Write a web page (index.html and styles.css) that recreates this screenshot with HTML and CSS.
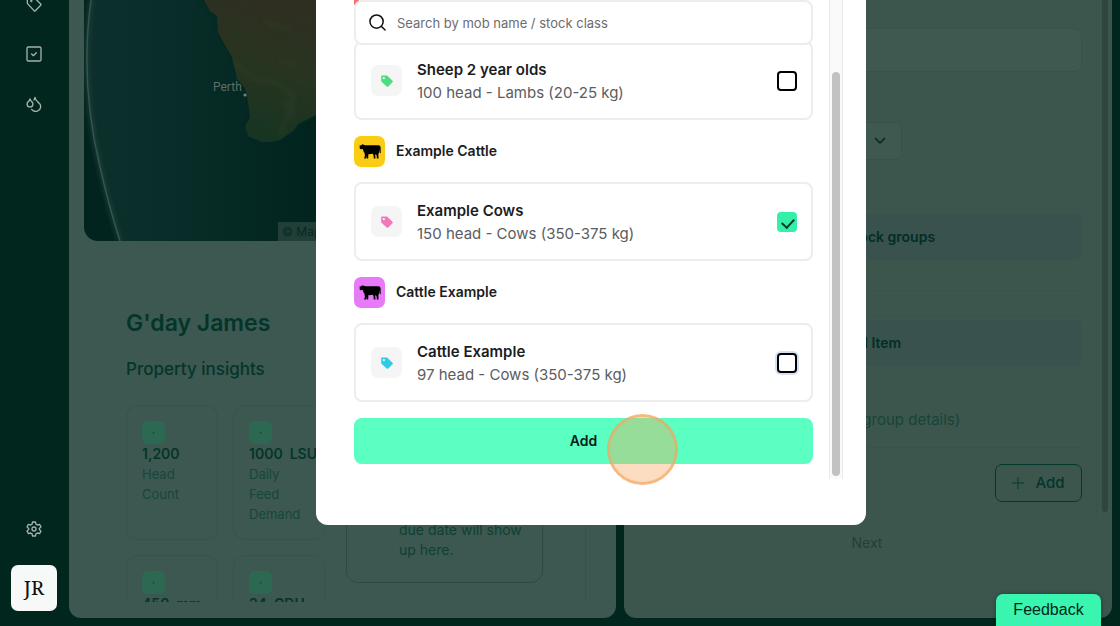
FILE: index.html
```html
<!DOCTYPE html>
<html lang="en">
<head>
    <meta charset="UTF-8">
    <meta name="viewport" content="width=device-width, initial-scale=1.0">
    <title>Add mobs</title>
    <link rel="stylesheet" href="styles.css">
</head>
<body>
    <svg class="sprite" aria-hidden="true">
        <symbol id="icon-tag" viewBox="0 0 24 24">
            <path fill-rule="evenodd" d="M2 3.500v8.200c0 .6.200 1.100.600 1.500l8.800 8.200c.8.800 2 .8 2.800 0l7.200-7.200c.8-.8.8-2 0-2.800l-8.800-8.200c-.4-.4-.9-.6-1.500-.6H3c-.6 0-1 .4-1 .9zM6.500 9a2 2 0 1 1 0-4 2 2 0 0 1 0 4z"/>
        </symbol>
        <symbol id="icon-cow" viewBox="0 0 42 28">
            <path d="M1 2l3 .500L6 0l3 1 3 1h25c2.500 0 4 1.500 4.300 4l.2 10-1 2-.9-2-.3-7-.8 7-1.500 3 .3 8.500h-3.300l-.2-5.500-1.800-3-1 2 .5 6.500h-3.200l-.5-6-1.300-3-7 .8-1.500-.3-.5 8.500h-3.200l.2-5.500-1.500 5.500H9.500l1.800-5-.8-6c-1.500-1.500-2.500-4-3-7.500L3 9.500 1 8l.5-2.500z"/>
        </symbol>
    </svg>

    <nav class="sidebar">
        <a href="#" aria-label="Tags">
            <svg viewBox="0 0 24 24"><path d="M2 11V3a1 1 0 0 1 1-1h9l10 10a1.500 1.500 0 0 1 0 2l-8 8a1.500 1.500 0 0 1-2 0z"/><circle cx="8" cy="7.500" r=".8"/></svg>
        </a>
        <a href="#" aria-label="Tasks">
            <svg viewBox="0 0 24 24"><rect x="1.500" y="1.500" width="21" height="21" rx="2"/><path d="M8.500 12l2.500 2.500 4.500-4.500"/></svg>
        </a>
        <a href="#" aria-label="Rainfall">
            <svg viewBox="0 0 24 24"><path d="M6 16.300c2.400 0 4.400-2 4.400-4.400 0-1.300-.6-2.500-1.900-3.500S6.400 6 6 4.300c-.3 1.600-1.200 3.100-2.500 4.100S1.600 10.600 1.600 11.900c0 2.400 2 4.400 4.400 4.400z"/><path d="M12 6a12 12 0 0 0 1.500-4c.6 2.800 2.200 5.400 4.500 7.200s4 4 4 6.300a7.500 7.500 0 0 1-13.500 4.500"/></svg>
        </a>
        <a href="#" class="settings" aria-label="Settings">
            <svg viewBox="0 0 24 24"><path d="M9.800 1.500h4.400l.7 3.300 2.100 1.200 3.300-1 2.200 3.800-2.500 2.400v1.600l2.500 2.400-2.200 3.800-3.300-1-2.100 1.200-.7 3.300H9.800l-.7-3.300L7 18l-3.300 1-2.200-3.800L4 12.800v-1.600L1.500 8.800 3.700 5 7 6l2.100-1.200z"/><circle cx="12" cy="12" r="3"/></svg>
        </a>
        <button class="avatar">JR</button>
    </nav>

    <main class="panels">
        <section class="panel home">
            <div class="home-scroll">
                <div class="map">
                    <svg viewBox="0 0 502 241" preserveAspectRatio="xMinYMin slice">
                        <defs>
                            <linearGradient id="sea" x1="0" x2="1" y1="0" y2="0">
                                <stop offset="0" stop-color="#0c302b"/>
                                <stop offset=".2" stop-color="#082c27"/>
                                <stop offset=".45" stop-color="#01241f"/>
                            </linearGradient>
                            <linearGradient id="land" gradientUnits="userSpaceOnUse" x1="220" x2="180" y1="0" y2="140">
                                <stop offset="0" stop-color="#302e20"/>
                                <stop offset=".5" stop-color="#283420"/>
                                <stop offset="1" stop-color="#163522"/>
                            </linearGradient>
                            <filter id="soft"><feGaussianBlur stdDeviation="2"/></filter>
                        </defs>
                        <rect width="502" height="241" fill="#02241f"/>
                        <path d="M7 0C0 50 1 105 16 167q9 40 20 74h466V0z" fill="url(#sea)"/>
                        <path d="M7 0C0 50 1 105 16 167q9 40 20 74" fill="none" stroke="#2c4e48" stroke-width="5" opacity=".5" filter="url(#soft)"/>
                        <path d="M7 0C0 50 1 105 16 167q9 40 20 74" fill="none" stroke="#34544d" stroke-width="1.500"/>
                        <path d="M116 0l14 14 6 18 14 25 8 24 8 12 0 24-4 10 6 10 16 5 14-2 12-12 23-15 40-8V0z" fill="#032c27" filter="url(#soft)"/>
                        <path d="M120 0l6 11 7 5 1 16 8 15 6 10 5 22 8 9 3 13 2 17-5 8 3 10 14 6 9 0 9-2 14-10 4-6 20-10 60-15V0z" fill="url(#land)"/>
                        <path d="M150 60q15 20 30 20t30 18l-14 38M180 20q14 10 26 8M196 60l16 6M200 100l10 16" fill="none" stroke="#34402a" stroke-width="5" opacity=".35" filter="url(#soft)"/>
                        <text x="129" y="91" class="map-label">Perth</text>
                        <circle cx="161" cy="95" r="1.500" fill="#75877e"/>
                    </svg>
                    <span class="map-credit">© Mapbox</span>
                </div>
                <div class="home-body">
                    <h1>G'day James</h1>
                    <h2>Property insights</h2>
                    <div class="home-columns">
                        <div class="insights">
                            <div class="insight"><i>·</i><b>1,200</b><span>Head Count</span></div>
                            <div class="insight"><i>·</i><b>1000  LSU</b><span>Daily Feed Demand</span></div>
                            <div class="insight"><i>·</i><b>450  mm</b></div>
                            <div class="insight"><i>·</i><b>24  GDU</b></div>
                        </div>
                        <div class="tasks">
                            <p>Tasks with a<br>due date will show<br>up here.</p>
                        </div>
                    </div>
                </div>
            </div>
        </section>

        <section class="panel form">
            <div class="form-scroll">
                <div class="form-body">
                    <input class="field" type="text" aria-label="Name">
                    <button class="select" aria-label="Choose type">
                        <svg viewBox="0 0 12 12"><path d="M1 4l5 5 5-5"/></svg>
                    </button>
                    <div class="form-section"><button class="soft-btn">Select stock groups</button></div>
                    <div class="form-section bordered"><button class="soft-btn">Feed Item</button></div>
                    <p class="form-note">Feed amounts (calculated by group details)</p>
                    <button class="add-row">
                        <svg viewBox="0 0 12 12"><path d="M6 0v12M0 6h12"/></svg>Add
                    </button>
                </div>
                <div class="form-bar"><div class="form-thumb"></div></div>
            </div>
            <button class="next" disabled>Next</button>
        </section>
    </main>

    <div class="modal" role="dialog" aria-label="Add mobs">
        <div class="mob-list">
            <label class="search">
                <svg viewBox="0 0 18 18"><circle cx="8" cy="8" r="7"/><path d="M13 13l4 4"/></svg>
                <input type="text" placeholder="Search by mob name / stock class" aria-label="Search by mob name / stock class">
            </label>
            <label class="mob first">
                <span class="mob-icon green"><svg><use href="#icon-tag"/></svg></span>
                <span class="mob-text"><b>Sheep 2 year olds</b><span>100 head - Lambs (20-25 kg)</span></span>
                <input type="checkbox">
            </label>
            <div class="group">
                <span class="group-icon yellow"><svg><use href="#icon-cow"/></svg></span>Example Cattle
            </div>
            <label class="mob">
                <span class="mob-icon pink"><svg><use href="#icon-tag"/></svg></span>
                <span class="mob-text"><b>Example Cows</b><span>150 head - Cows (350-375 kg)</span></span>
                <input type="checkbox" checked>
            </label>
            <div class="group">
                <span class="group-icon purple"><svg><use href="#icon-cow"/></svg></span>Cattle Example
            </div>
            <label class="mob">
                <span class="mob-icon cyan"><svg><use href="#icon-tag"/></svg></span>
                <span class="mob-text"><b>Cattle Example</b><span>97 head - Cows (350-375 kg)</span></span>
                <input type="checkbox" class="focused">
            </label>
            <button class="add-btn">Add</button>
        </div>
        <div class="modal-bar"><div class="modal-thumb"></div></div>
        <div class="click-ring"></div>
    </div>

    <button class="feedback">Feedback</button>
</body>
</html>
```
FILE: styles.css
```css
* {
    box-sizing: border-box;
}
body {
    display: flex;
    height: 100vh;
    margin: 0;
    overflow: hidden;
    position: relative;
    font-family: Inter, "Liberation Sans", sans-serif;
    font-size: 14px;
    line-height: 20px;
    background: #00261e;
    color: #04352a;
}
button, input {
    font: inherit;
    color: inherit;
}
button {
    padding: 0;
    border: none;
    background: none;
    cursor: pointer;
}
h1, h2, p {
    margin: 0;
}
.sprite {
    position: absolute;
    width: 0;
    height: 0;
}

/* sidebar */
.sidebar {
    display: flex;
    flex-direction: column;
    align-items: center;
    flex-shrink: 0;
    gap: 34px;
    width: 69px;
    padding: 0 1px 15px 0;
}
.sidebar a {
    height: 16px;
}
.sidebar a:first-child {
    margin-top: -4px;
}
.sidebar svg {
    display: block;
    width: 16px;
    height: 16px;
    fill: none;
    stroke: #a3b2ad;
    stroke-width: 2;
    stroke-linecap: round;
    stroke-linejoin: round;
}
.sidebar .settings {
    margin-top: auto;
    margin-bottom: -6px;
}
.avatar {
    width: 46px;
    height: 46px;
    border-radius: 7px;
    background: #f7f8f8;
    color: #111;
    font-family: "Noto Serif", "Liberation Serif", serif;
    font-size: 20px;
}

/* panels */
.panels {
    display: grid;
    grid-template-columns: 547fr 488fr;
    flex: 1;
    gap: 8px;
    min-width: 0;
    padding: 0 8px 8px 0;
}
.panel {
    min-width: 0;
    min-height: 0;
    border-radius: 0 0 12px 12px;
    background: #3d5850;
}
.home {
    padding: 0 30px 16px 15px;
}
.home-scroll {
    height: 100%;
    overflow: hidden;
    border-right: 1px solid #38524a;
}
.map {
    height: 241px;
    position: relative;
    overflow: hidden;
    border-radius: 0 0 14px 14px;
}
.map svg {
    display: block;
    width: 100%;
    height: 100%;
}
.map-label {
    font-family: Roboto, sans-serif;
    font-size: 12px;
    fill: #5c7068;
}
.map-credit {
    position: absolute;
    left: 194px;
    bottom: 0;
    padding: 0 4px;
    font-size: 12px;
    line-height: 19px;
    background: #213f38;
    color: #08291f;
}
.home-body {
    padding: 66px 42px 0;
}
h1 {
    font-size: 23px;
    line-height: 32px;
    font-weight: 600;
}
h2 {
    margin-top: 16px;
    font-size: 17px;
    line-height: 28px;
    font-weight: 500;
}
.home-columns {
    display: flex;
    align-items: flex-start;
    gap: 21px;
    margin-top: 22px;
}
.insights {
    display: grid;
    grid-template-columns: 92px 92px;
    gap: 15px;
}
.insight {
    display: flex;
    flex-direction: column;
    min-height: 135px;
    padding: 15px;
    border: 1px solid #38534b;
    border-radius: 12px;
    color: #16473a;
    font-size: 13px;
}
.insight i {
    width: 23px;
    height: 23px;
    border-radius: 6px;
    background: #2d6852;
    text-align: center;
    line-height: 23px;
    font-style: normal;
}
.insight b {
    font-size: 14px;
    font-weight: 600;
    white-space: pre;
    color: #04352a;
}
.tasks {
    display: flex;
    flex-direction: column;
    justify-content: flex-end;
    width: 198px;
    min-height: 178px;
    padding: 0 16px 22px 52px;
    border: 1px solid #2c4c42;
    border-radius: 12px;
    color: #0e4032;
}

/* form panel */
.form {
    display: flex;
    flex-direction: column;
    padding-right: 2px;
    background: #3c564e;
}
.form-scroll {
    display: flex;
    height: 517px;
}
.form-body {
    display: flex;
    flex-direction: column;
    flex: 1;
    padding: 28px 14px 0 30px;
}
.field {
    height: 44px;
    border: 1px solid #38514a;
    border-radius: 7px;
    background: #3f5951;
}
.select {
    width: 248px;
    height: 38px;
    margin-top: 50px;
    padding-right: 15px;
    border: 1px solid #38514a;
    border-radius: 7px;
    background: #3f5951;
    text-align: right;
}
.select svg {
    width: 12px;
    height: 12px;
    fill: none;
    stroke: #00281f;
    stroke-width: 1.5;
}
.form-section {
    display: flex;
    height: 77px;
    margin-top: 54px;
    padding-bottom: 30px;
    border-bottom: 1px solid #39524a;
}
.form-section.bordered {
    height: 51px;
    margin-top: 24px;
    padding: 4px 0 0;
    border-top: 1px solid #39524a;
    border-bottom: none;
}
.soft-btn {
    flex: 1;
    border-radius: 7px;
    background: #39524e;
    color: #022e24;
    font-weight: 600;
}
.form-note {
    margin-top: 42px;
    padding-bottom: 15px;
    border-bottom: 1px solid #39524a;
    font-size: 15px;
    line-height: 24px;
    color: #164538;
    white-space: nowrap;
}
.add-row {
    display: flex;
    align-items: center;
    justify-content: center;
    align-self: flex-end;
    gap: 11px;
    width: 87px;
    height: 38px;
    margin-top: 16px;
    border: 1px solid #03392c;
    border-radius: 7px;
    font-size: 15px;
    font-weight: 500;
}
.add-row svg {
    width: 12px;
    height: 12px;
    stroke: #03392c;
}
.form-bar {
    width: 14px;
    padding: 0 2px 5px 5px;
    border-left: 1px solid #39524a;
}
.form-thumb {
    height: 100%;
    border-radius: 0 0 4px 4px;
    background: #2e463f;
}
.next {
    align-self: center;
    margin-top: 16px;
    color: #233f36;
}

/* modal */
.modal {
    display: flex;
    position: absolute;
    top: 0;
    left: 50%;
    width: 550px;
    margin-left: -244px;
    padding: 0 23px 46px 38px;
    border-radius: 0 0 12px 12px;
    background: white;
    color: #1b1c1e;
}
.mob-list {
    display: flex;
    flex-direction: column;
    flex: 1;
    gap: 16px;
    margin-right: 16px;
    padding-bottom: 15px;
    background: linear-gradient(#f87171, #f87171) no-repeat 0 0 / 5px 5px;
}
.search {
    display: flex;
    align-items: center;
    gap: 11px;
    height: 45px;
    padding: 0 13px;
    position: relative;
    z-index: 1;
    border: 2px solid #ededee;
    border-radius: 8px;
    background: white;
    font-size: 13px;
}
.search svg {
    width: 17px;
    height: 17px;
    fill: none;
    stroke: #111;
    stroke-width: 1.6;
    stroke-linecap: round;
}
.search input {
    flex: 1;
    padding: 0;
    border: none;
    outline: none;
    background: none;
}
.search input::placeholder {
    color: #6b6c70;
    opacity: 1;
}
.mob {
    display: flex;
    align-items: center;
    height: 79px;
    padding: 0 14px 0 15px;
    border: 2px solid #ededee;
    border-radius: 8px;
    background: white;
    font-size: 15px;
    line-height: 23px;
}
.mob.first {
    margin-top: -20px;
}
.mob-icon {
    display: flex;
    align-items: center;
    justify-content: center;
    width: 31px;
    height: 31px;
    margin-right: 15px;
    border-radius: 7px;
    background: #f5f5f5;
}
.mob-icon svg {
    width: 14px;
    height: 14px;
    fill: currentColor;
}
.green { color: #4ade80; }
.pink { color: #f07ab8; }
.cyan { color: #2bcde8; }
.mob-text {
    display: flex;
    flex-direction: column;
    flex: 1;
    color: #5b5c61;
}
.mob-text b {
    font-weight: 600;
    color: #1b1c1e;
}
.mob input {
    appearance: none;
    width: 20px;
    height: 20px;
    margin: 0;
    border: 2px solid #000;
    border-radius: 4px;
    background: white;
}
.mob input:checked {
    border-color: #34efa8;
    background: #34efa8;
}
.mob input:checked::before {
    content: "";
    display: block;
    width: 10px;
    height: 6px;
    margin: 4px 3px;
    border: solid #06382a;
    border-width: 0 0 2px 2px;
    transform: rotate(-47deg);
}
.mob .focused {
    box-shadow: 0 0 0 2px #d5e0f5;
}
.group {
    display: flex;
    align-items: center;
    gap: 11px;
    height: 30px;
    font-weight: 600;
}
.group-icon {
    display: flex;
    align-items: center;
    justify-content: center;
    width: 31px;
    height: 31px;
    border-radius: 7px;
}
.group-icon svg {
    width: 22px;
    height: 15px;
}
.yellow { background: #facc15; }
.purple { background: #e879f9; }
.add-btn {
    height: 46px;
    border-radius: 8px;
    background: #5affc1;
    color: #0b2018;
    font-weight: 600;
}
.modal-bar {
    width: 14px;
    padding: 72px 2px 3px;
    border: solid #ebebeb;
    border-width: 0 1px;
    background: #fafafa;
}
.modal-thumb {
    height: 100%;
    border-radius: 4px;
    background: #c2c2c2;
}
.click-ring {
    position: absolute;
    right: 188px;
    bottom: 40px;
    width: 71px;
    height: 71px;
    border: 3px solid rgba(243, 166, 97, .65);
    border-radius: 50%;
    background: rgba(250, 166, 91, .38);
}

.feedback {
    position: absolute;
    right: 19px;
    bottom: 0;
    width: 105px;
    height: 32px;
    border-radius: 7px 7px 0 0;
    background: #3af5af;
    box-shadow: 0 0 5px rgba(0, 0, 0, .3);
    color: #04251b;
    font-family: "Liberation Sans", Arial, sans-serif;
    font-size: 16px;
}
```
